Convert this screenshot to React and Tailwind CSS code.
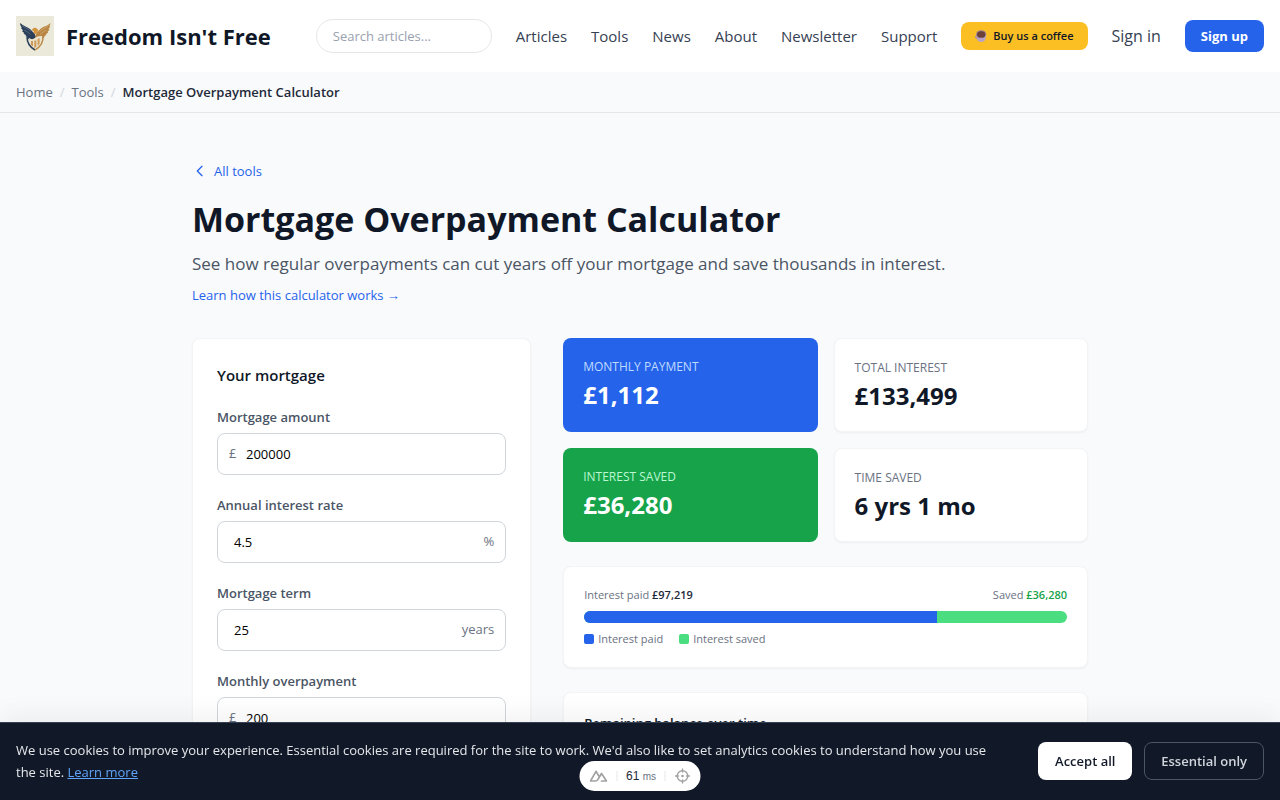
import React, { useState } from "react";

const NAV = ["Articles", "Tools", "News", "About", "Newsletter", "Support"];

function Logo() {
  return (
    <svg width="38" height="40" viewBox="0 0 38 40" aria-hidden="true">
      <rect width="38" height="40" fill="#ebe9da" />
      <path
        d="M4 7c3 3 7 3.500 10 6 2 1.500 3 3.500 4.500 4.500L20 21l-3 4.500C14 25 12 23 11 20.500l-1.500-.5 .5-1-2.500-1.200 .8-.8L6 15.200l1-.7L5 12l.8-.5C4.600 10 4 8.500 4 7z"
        fill="#2b3f5a"
      />
      <path d="M6 9.500c3 2.500 6 3 9 6M8 14c2.500 1.500 4 2 6.500 4.500" stroke="#6f8196" strokeWidth="0.6" fill="none" />
      <path
        d="M34.500 7c-3 3-6 3-9 5-2 1.500-3.500 3.500-5 5l-1.500 5 3 2c4 0 6-2 7-4.500l1.500-.5-.5-1 2.300-1.500-.8-.8 2-2-1-.7 1.700-2.500-.8-.5c.8-1 1.100-2 1.100-3z"
        fill="#b98542"
      />
      <path d="M32.500 9.500c-3 2.500-6 3-9 6M30.500 14c-2.500 1.500-4 2-6.500 4.500" stroke="#dcbd86" strokeWidth="0.6" fill="none" />
      <path d="M16 14.500c.3-2 2-3 3.800-2.500 1.500.4 2.400 1.600 2.200 3l-2.500 3.500L17.500 17l.3-2z" fill="#d3923c" />
      <path d="M13 22c2 1.500 4 1.500 6 0 2.500-2 5-2 7.500-2 .5 6-2 10.500-7.500 13.500-4-2.500-6-6-6-11.500z" fill="#e9e2cd" />
      <path d="M11 20.500c0 6 2.500 10.500 8 13.500" stroke="#2b3f5a" strokeWidth="1.600" fill="none" />
      <path d="M27 19.500c.5 6.500-2.500 11.500-8 14.500" stroke="#b98542" strokeWidth="1.400" fill="none" />
      <path d="M15 29v-4h2v5.500zM18.300 32v-7.500h2V31zM21.600 30v-7l2-.8v5.500z" fill="#cf9a58" />
    </svg>
  );
}

function CoffeeCup() {
  return (
    <svg width="12" height="14" viewBox="0 0 12 14" aria-hidden="true">
      <path d="M1.300 5h9.800c.3 4.500-1.300 8-4.900 8S1 9.500 1.300 5z" fill="#b7a3c6" />
      <circle cx="1.800" cy="8" r="1.300" fill="none" stroke="#9f8bb0" strokeWidth="0.9" />
      <ellipse cx="6.200" cy="5.200" rx="5" ry="4" fill="#9c7f97" />
      <ellipse cx="6.200" cy="5.400" rx="4.100" ry="3.200" fill="#6d4038" />
    </svg>
  );
}

function Field({ id, label, prefix, suffix, initial }) {
  const [value, setValue] = useState(initial);
  return (
    <div>
      <label htmlFor={id} className="mb-1.5 block text-[13px] leading-5 font-semibold text-gray-600">
        {label}
      </label>
      <div className="relative">
        {prefix && (
          <span className="absolute inset-y-0 left-3 flex items-center text-[13px] text-gray-500">{prefix}</span>
        )}
        <input
          id={id}
          value={value}
          onChange={(e) => setValue(e.target.value)}
          className={
            "block w-full rounded-lg border border-gray-300 bg-white py-2.5 text-[13px] leading-5 text-black " +
            (prefix ? "pl-7 pr-4" : "pl-4 pr-14")
          }
        />
        {suffix && (
          <span className="absolute inset-y-0 right-3 flex items-center text-[13px] text-gray-500">{suffix}</span>
        )}
      </div>
    </div>
  );
}

function Stat({ label, value, card, labelColor }) {
  return (
    <div className={"rounded-lg px-5 pt-[21px] pb-[19px] " + card}>
      <p className={"mb-1 text-xs font-medium uppercase " + labelColor}>{label}</p>
      <p className="text-2xl font-bold">{value}</p>
    </div>
  );
}

const PLAIN_CARD = "border border-gray-100 bg-white text-gray-900 shadow-[0_1px_2px_rgba(0,0,0,0.05)]";

export default function App() {
  return (
    <div className="min-h-screen bg-gray-50 pb-20 font-['Open_Sans','Noto_Sans',sans-serif] text-gray-900">
      <header className="flex h-18 items-center gap-6 bg-white px-4">
        <a href="#" className="mr-auto flex items-center gap-3 whitespace-nowrap">
          <Logo />
          <span className="text-[22px] leading-8 font-bold">Freedom Isn't Free</span>
        </a>
        <input
          type="search"
          aria-label="Search articles"
          placeholder="Search articles..."
          className="w-44 rounded-full border border-gray-200 px-4 py-1.5 text-[13px] leading-5 placeholder:text-gray-400"
        />
        <nav className="flex items-center gap-6 text-[15px] leading-6 text-gray-700">
          {NAV.map((item) => (
            <a key={item} href="#">{item}</a>
          ))}
        </nav>
        <a href="#" className="flex h-7 items-center gap-1.5 rounded-lg bg-[#fbbf24] px-3.5 text-[11px] font-semibold whitespace-nowrap text-gray-900">
          <CoffeeCup />
          Buy us a coffee
        </a>
        <a href="#" className="text-base whitespace-nowrap text-gray-700">Sign in</a>
        <a href="#" className="rounded-lg bg-[#2563eb] px-4 py-1.5 text-[13px] leading-5 font-bold whitespace-nowrap text-white">
          Sign up
        </a>
      </header>

      <nav aria-label="Breadcrumb" className="flex gap-[7px] border-b border-gray-200 px-4 py-2.5 text-[13px] leading-5 text-gray-500">
        <a href="#">Home</a>
        <span className="text-gray-300">/</span>
        <a href="#">Tools</a>
        <span className="text-gray-300">/</span>
        <span className="font-semibold text-gray-800">Mortgage Overpayment Calculator</span>
      </nav>

      <main className="mx-auto max-w-4xl py-12">
        <a href="#" className="inline-flex items-center gap-1.5 text-[13px] leading-5 text-[#2563eb]">
          <svg width="16" height="16" viewBox="0 0 24 24" fill="none" stroke="currentColor" strokeWidth="2" strokeLinecap="round" strokeLinejoin="round" aria-hidden="true">
            <path d="M15 19l-7-7 7-7" />
          </svg>
          All tools
        </a>
        <h1 className="mt-3.5 mb-[11px] text-[34px] leading-10 font-bold">Mortgage Overpayment Calculator</h1>
        <p className="mb-[7px] text-[17px] leading-7 text-gray-600">
          See how regular overpayments can cut years off your mortgage and save thousands in interest.
        </p>
        <a href="#" className="block text-[13px] leading-5 text-[#2563eb]">Learn how this calculator works →</a>

        <div className="mt-[33px] grid grid-cols-5 gap-8">
          <section className={"col-span-2 rounded-lg p-6 " + PLAIN_CARD}>
            <h2 className="mb-5 text-[15px] leading-6 font-semibold">Your mortgage</h2>
            <div className="space-y-5">
              <Field id="amount" label="Mortgage amount" prefix="£" initial="200000" />
              <Field id="rate" label="Annual interest rate" suffix="%" initial="4.5" />
              <Field id="term" label="Mortgage term" suffix="years" initial="25" />
              <Field id="overpayment" label="Monthly overpayment" prefix="£" initial="200" />
            </div>
          </section>

          <div className="col-span-3 space-y-6">
            <div className="grid grid-cols-2 gap-4">
              <Stat label="Monthly payment" value="£1,112" card="bg-[#2563eb] text-white" labelColor="text-[#bfdbfe]" />
              <Stat label="Total interest" value="£133,499" card={PLAIN_CARD} labelColor="text-gray-500" />
              <Stat label="Interest saved" value="£36,280" card="bg-[#16a34a] text-white" labelColor="text-[#bbf7d0]" />
              <Stat label="Time saved" value="6 yrs 1 mo" card={PLAIN_CARD} labelColor="text-gray-500" />
            </div>

            <section className={"rounded-lg p-5 text-[11px] leading-4 " + PLAIN_CARD}>
              <div className="mb-2 flex justify-between text-gray-500">
                <span>Interest paid <strong className="font-semibold text-gray-800">£97,219</strong></span>
                <span>Saved <strong className="font-semibold text-[#16a34a]">£36,280</strong></span>
              </div>
              <div className="flex h-3 overflow-hidden rounded-full bg-[#4ade80]">
                <div className="w-[73%] bg-[#2563eb]" />
              </div>
              <div className="mt-2 flex gap-4 text-gray-500">
                <span className="flex items-center gap-1"><i className="size-2.5 rounded-xs bg-[#2563eb]" />Interest paid</span>
                <span className="flex items-center gap-1"><i className="size-2.5 rounded-xs bg-[#4ade80]" />Interest saved</span>
              </div>
            </section>

            <section className={"rounded-lg p-5 " + PLAIN_CARD}>
              <h2 className="text-[13px] leading-5 font-semibold">Remaining balance over time</h2>
            </section>
          </div>
        </div>
      </main>

      <aside aria-label="Cookie consent" className="fixed inset-x-0 bottom-0 flex items-center gap-8 border-t border-gray-700 bg-[#111827] px-4 pt-4 pb-[17px] shadow-[0_-8px_24px_rgba(0,0,0,0.05)]">
        <p className="flex-1 text-[13px] leading-[22px] font-medium text-gray-200">
          We use cookies to improve your experience. Essential cookies are required for the site to work. We'd also like to set analytics cookies to understand how you use the site.{" "}
          <a href="#" className="text-[#60a5fa] underline">Learn more</a>
        </p>
        <div className="flex gap-3 text-[13px] leading-5 font-semibold">
          <button type="button" className="min-w-[94px] rounded-lg bg-white px-4 py-[9px] text-[#111827]">Accept all</button>
          <button type="button" className="rounded-lg border border-gray-600 px-4 py-2 text-gray-300">Essential only</button>
        </div>
      </aside>

      <div className="fixed bottom-[9px] left-1/2 flex h-[30px] w-[121px] -translate-x-1/2 items-center justify-between rounded-full bg-white px-2.5 font-['Liberation_Sans',sans-serif] text-xs text-gray-800">
        <svg width="18" height="12" viewBox="0 0 18 12" fill="none" stroke="#a3a3a3" strokeWidth="1.700" strokeLinejoin="round" strokeLinecap="round" aria-hidden="true">
          <path d="M6 11H1L6.500 1.300 9.300 6M6 11c2 0 2.500-1.500 3.300-3L12 3.500 17 11h-5" />
        </svg>
        <span className="h-2.5 w-px bg-gray-200" />
        <span>61 <span className="text-[10px] text-gray-500">ms</span></span>
        <span className="h-2.5 w-px bg-gray-200" />
        <svg width="16" height="16" viewBox="0 0 16 16" fill="none" stroke="#a3a3a3" strokeWidth="1.400" strokeLinecap="round" aria-hidden="true">
          <circle cx="8" cy="8" r="5.300" />
          <path d="M8 1v3M8 12v3M1 8h3M12 8h3" />
          <circle cx="8" cy="8" r="0.600" fill="#a3a3a3" />
        </svg>
      </div>
    </div>
  );
}
